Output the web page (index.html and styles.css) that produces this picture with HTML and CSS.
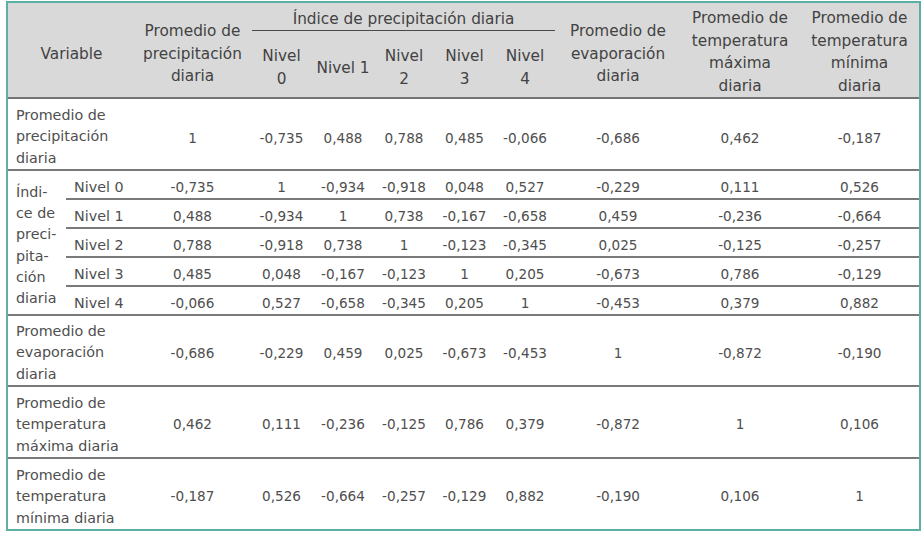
FILE: index.html
```html
<!DOCTYPE html>
<html lang="es">
<head>
<meta charset="utf-8">
<title>Correlaciones</title>
<link rel="stylesheet" href="styles.css">
</head>
<body>
<div class="frame">
<table class="corr">
<colgroup>
<col class="w58"><col class="w69"><col class="w115">
<col class="w63"><col class="w60"><col class="w62"><col class="w59"><col class="w62">
<col class="w124"><col class="w120"><col class="w119">
</colgroup>
<thead>
<tr class="h1">
<th colspan="2" rowspan="2" class="span">Variable</th>
<th rowspan="2" class="span">Promedio de<br>precipitación<br>diaria</th>
<th colspan="5" class="grp"><div class="grp-label">Índice de precipitación diaria</div></th>
<th rowspan="2" class="span">Promedio de<br>evaporación<br>diaria</th>
<th rowspan="2" class="span tight">Promedio de<br>temperatura<br>máxima<br>diaria</th>
<th rowspan="2" class="span tight">Promedio de<br>temperatura<br>mínima<br>diaria</th>
</tr>
<tr class="h2">
<th>Nivel<br>0</th><th>Nivel 1</th><th>Nivel<br>2</th><th>Nivel<br>3</th><th>Nivel<br>4</th>
</tr>
</thead>
<tbody>
<tr class="big r72 first">
<td colspan="2" class="lbl">Promedio de<br>precipitación<br>diaria</td>
<td>1</td><td>-0,735</td><td>0,488</td><td>0,788</td><td>0,485</td><td>-0,066</td><td>-0,686</td><td>0,462</td><td>-0,187</td>
</tr>
<tr class="nv">
<td rowspan="5" class="lbl idx">Índi-<br>ce de<br>preci-<br>pita-<br>ción<br>diaria</td>
<td class="lvl">Nivel 0</td>
<td>-0,735</td><td>1</td><td>-0,934</td><td>-0,918</td><td>0,048</td><td>0,527</td><td>-0,229</td><td>0,111</td><td>0,526</td>
</tr>
<tr class="nv">
<td class="lvl">Nivel 1</td>
<td>0,488</td><td>-0,934</td><td>1</td><td>0,738</td><td>-0,167</td><td>-0,658</td><td>0,459</td><td>-0,236</td><td>-0,664</td>
</tr>
<tr class="nv">
<td class="lvl">Nivel 2</td>
<td>0,788</td><td>-0,918</td><td>0,738</td><td>1</td><td>-0,123</td><td>-0,345</td><td>0,025</td><td>-0,125</td><td>-0,257</td>
</tr>
<tr class="nv">
<td class="lvl">Nivel 3</td>
<td>0,485</td><td>0,048</td><td>-0,167</td><td>-0,123</td><td>1</td><td>0,205</td><td>-0,673</td><td>0,786</td><td>-0,129</td>
</tr>
<tr class="nv">
<td class="lvl">Nivel 4</td>
<td>-0,066</td><td>0,527</td><td>-0,658</td><td>-0,345</td><td>0,205</td><td>1</td><td>-0,453</td><td>0,379</td><td>0,882</td>
</tr>
<tr class="big r71">
<td colspan="2" class="lbl">Promedio de<br>evaporación<br>diaria</td>
<td>-0,686</td><td>-0,229</td><td>0,459</td><td>0,025</td><td>-0,673</td><td>-0,453</td><td>1</td><td>-0,872</td><td>-0,190</td>
</tr>
<tr class="big r72">
<td colspan="2" class="lbl">Promedio de<br>temperatura<br>máxima diaria</td>
<td>0,462</td><td>0,111</td><td>-0,236</td><td>-0,125</td><td>0,786</td><td>0,379</td><td>-0,872</td><td>1</td><td>0,106</td>
</tr>
<tr class="big last">
<td colspan="2" class="lbl">Promedio de<br>temperatura<br>mínima diaria</td>
<td>-0,187</td><td>0,526</td><td>-0,664</td><td>-0,257</td><td>-0,129</td><td>0,882</td><td>-0,190</td><td>0,106</td><td>1</td>
</tr>
</tbody>
</table>
</div>
</body>
</html>
```
FILE: styles.css
```css
html, body {
  margin: 0;
  padding: 0;
  background: #ffffff;
}

body {
  font-family: "DejaVu Sans", "Liberation Sans", sans-serif;
  color: #4f4f4f;
}

.frame {
  margin: 1px 0 0 6px;
  width: 915px;
  border: 2px solid #5bb0a2;
  box-sizing: border-box;
}

.corr {
  border-collapse: separate;
  border-spacing: 0;
  table-layout: fixed;
  width: 911px;
}

.corr th,
.corr td {
  padding: 0;
  box-sizing: border-box;
}

.w58 { width: 58px; }
.w69 { width: 69px; }
.w115 { width: 115px; }
.w63 { width: 63px; }
.w60 { width: 60px; }
.w62 { width: 62px; }
.w59 { width: 59px; }
.w124 { width: 124px; }
.w120 { width: 120px; }
.w119 { width: 119px; }

.corr thead th {
  background: #d9d9d9;
  font-weight: normal;
  font-size: 15.3px;
  line-height: 22.5px;
  color: #424242;
  text-align: center;
  vertical-align: middle;
  white-space: nowrap;
}

.corr .h1 th {
  height: 28px;
}

.corr .h2 th {
  height: 68px;
  padding-top: 8px;
  line-height: 23px;
  border-bottom: 2px solid #747474;
}

.corr thead th.span {
  padding-top: 8px;
  border-bottom: 2px solid #747474;
}

.corr thead th.tight {
  padding-top: 4px;
  line-height: 22.5px;
}

.corr thead th.grp {
  vertical-align: bottom;
  padding: 0 1px 0 2px;
}

.grp-label {
  border-bottom: 1px solid #4a4a4a;
  line-height: 22px;
  padding-bottom: 0;
}

.corr tbody td {
  font-size: 13.6px;
  line-height: 21.5px;
  text-align: center;
  vertical-align: middle;
  border-bottom: 2px solid #7a7a7a;
  white-space: nowrap;
}

.corr tbody tr.big td {
  padding-top: 6px;
}

.corr tbody tr.first td {
  padding-top: 9px;
}

.corr tbody tr.nv td {
  padding-top: 6px;
  line-height: 19px;
}

.corr tbody td.lbl {
  text-align: left;
  padding-left: 8px;
  font-size: 14.3px;
  line-height: 21.5px;
}

.corr tbody tr.big td.lbl {
  padding-top: 0;
  vertical-align: bottom;
}

.corr tbody tr.nv td.idx {
  line-height: 21.2px;
  padding-top: 6px;
}

.corr tbody td.lvl {
  text-align: left;
  padding-left: 8px;
  font-size: 14.3px;
}

.corr tr.r72 td { height: 72px; }
.corr tr.r71 td { height: 71px; }
.corr tr.nv td { height: 29px; }

.corr tr.nv td.idx { height: auto; }

.corr tr.last td {
  height: 70px;
  border-bottom: none;
}
```
